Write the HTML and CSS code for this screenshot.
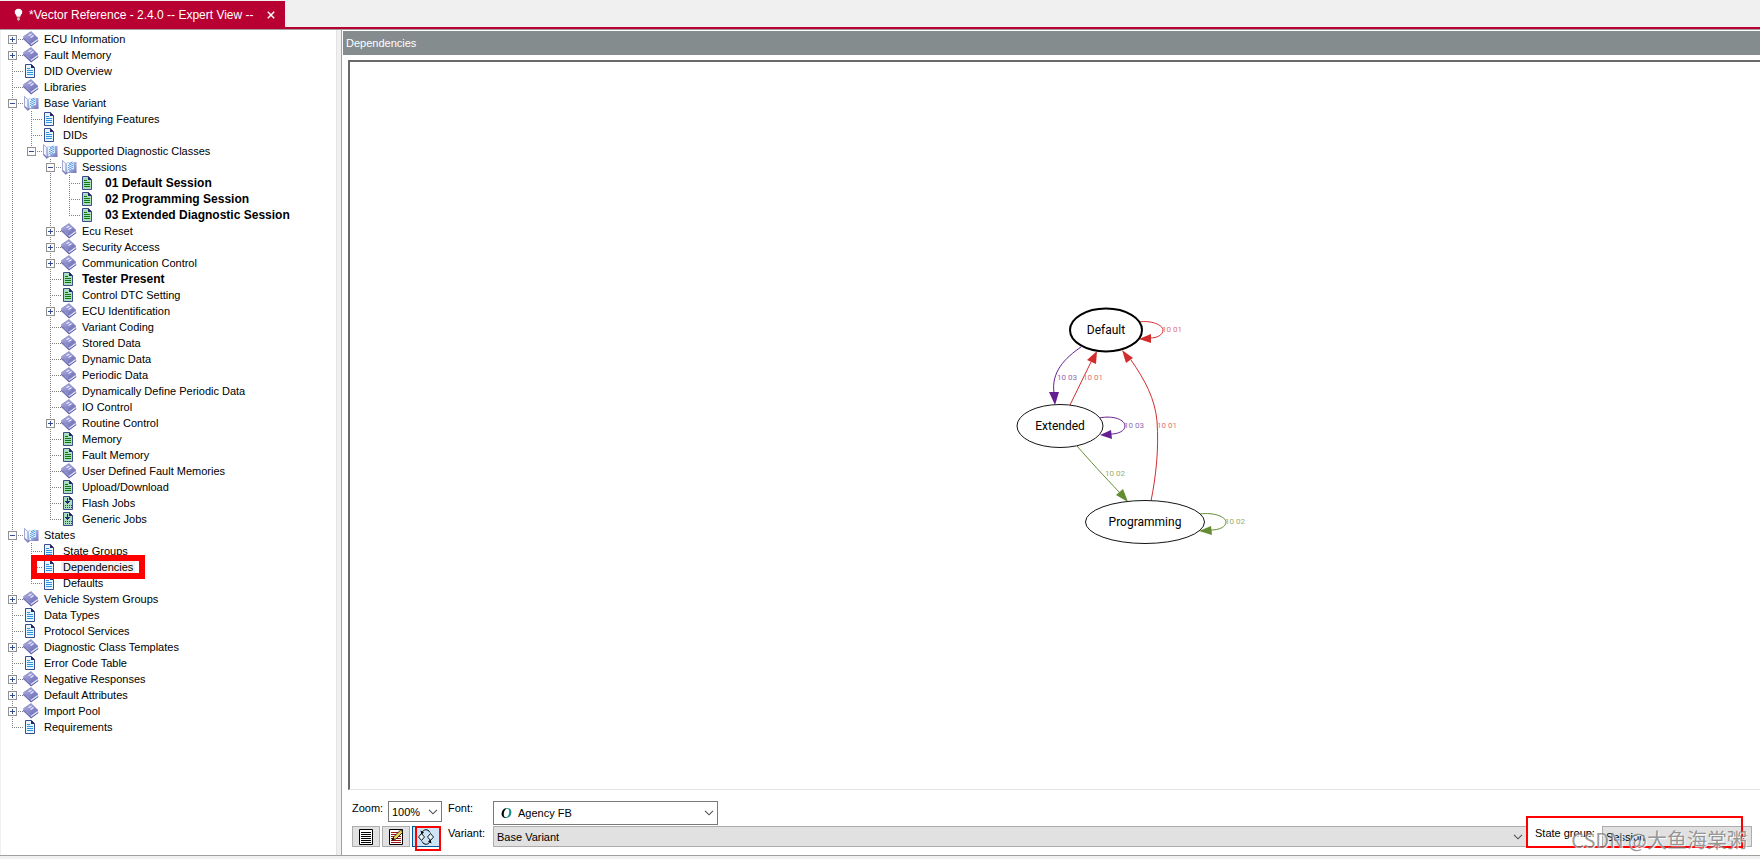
FILE: index.html
```
<!DOCTYPE html>
<html lang="en">
<head>
    <meta charset="utf-8">
    <title>Vector Reference</title>
    <link rel="stylesheet" href="styles.css">
</head>
<body>
    <svg class="defs" aria-hidden="true">
        <linearGradient id="book-fill" x1="0" y1="0" x2="1" y2="1">
            <stop offset="0" stop-color="#b4b4e6"/>
            <stop offset="1" stop-color="#6464b4"/>
        </linearGradient>
        <linearGradient id="cover-fill" x1="0" y1="0" x2="1" y2="1">
            <stop offset="0" stop-color="#d2dcf5"/>
            <stop offset="1" stop-color="#6e6eb9"/>
        </linearGradient>
        <symbol id="book" viewBox="0 0 16 16">
            <path d="M0 7.5 L8 15.5 L15.5 10 L14.5 8 Z" fill="#5a5aa5"/>
            <path d="M2 8.5 L8.3 14 L15 9.2 L14 7.5 Z" fill="#e6e6f5"/>
            <path d="M.5 5.5 L8 .5 L15 7.2 L7.8 12.5 Z" fill="url(#book-fill)" stroke="#7878be" stroke-width=".6"/>
            <path d="M0 6 L8 13 L8 15 L0 8 Z" fill="#7878be"/>
            <path d="M5.5 4.8 L8.5 3 M7.5 6.5 L10.5 4.6" stroke="#f0f0ff" stroke-width="1.2"/>
        </symbol>
        <symbol id="open" viewBox="0 0 16 16">
            <path d="M4.5 4 L7 3 H15.5 V14 H7 L4.5 15.5 Z" fill="url(#cover-fill)"/>
            <path d="M1.5 1.5 L4.8 4.5 V14 L1.5 11.5 Z" fill="#f0f4ff" stroke="#8c96c8" stroke-width=".8"/>
            <path d="M1.5 11.5 L4.8 15 L6.5 13.5" fill="none" stroke="#7878be" stroke-width="1.2"/>
            <path d="M6 4.5 L12.5 1.2 L13 9.8 L6.5 13.5 Z" fill="#f0f8ff"/>
            <path d="M8 4.7 L11.5 3 M7 6.7 L12.3 4.2 M7 8.7 L12.5 6 M7 10.7 L12.3 8 M8 12 L11.5 10.2" stroke="#4696dc" stroke-width=".9"/>
        </symbol>
        <symbol id="page" viewBox="1 0 16 16">
            <path d="M3.5 1.5 H9.5 L12.5 4.5 V14.5 H3.5 Z" fill="#e8f5ff" stroke="#3c4b8c"/>
            <path d="M9 1 V5 H13 Z" fill="#28286e"/>
            <path d="M5 5.5 H8 M5 7.5 H11 M5 9.5 H11 M5 11.5 H11" stroke="#2896e6"/>
        </symbol>
        <symbol id="green" viewBox="1 0 16 16">
            <path d="M3.5 1.5 H9.5 L12.5 4.5 V14.5 H3.5 Z" fill="#aadcbe" stroke="#3c4b8c"/>
            <path d="M9 1 V5 H13 Z" fill="#28286e"/>
            <path d="M5 5.5 H8 M5 7.5 H11 M5 9.5 H11 M5 11.5 H11" stroke="#0a780a"/>
        </symbol>
        <symbol id="job" viewBox="1 0 16 16">
            <path d="M3.5 1.5 H9.5 L12.5 4.5 V14.5 H3.5 Z" fill="#aadcbe" stroke="#3c4b8c"/>
            <path d="M9 1 V5 H13 Z" fill="#28286e"/>
            <path d="M7.5 3 V7 M5 6.5 H10 M6 7.5 H9 M7 8.5 H8" stroke="#28286e"/>
            <path d="M5 10.5 H12 M5 12.5 H12" stroke="#145a32" stroke-dasharray="1 1"/>
        </symbol>
        <symbol id="chevron" viewBox="0 0 10 6">
            <path d="M1 .8 L5 4.8 L9 .8" fill="none" stroke="#505050" stroke-width="1.1"/>
        </symbol>
    </svg>

    <header class="tabs">
        <div class="tab">
            <svg class="bulb" viewBox="0 0 10 14"><path d="M5 0 C2 0 .8 2.2 .8 4 C.8 6 3 7 3 9 H7 C7 7 9.2 6 9.2 4 C9.2 2.2 8 0 5 0 Z" fill="#fff"/><path d="M3.5 9.5 H6.5 V12 L5 14 L3.5 12 Z" fill="#b4bea0"/></svg>
            <span>*Vector Reference - 2.4.0 -- Expert View --</span>
            <button class="close" aria-label="Close tab"><svg viewBox="0 0 8 8"><path d="M.8 .8 L7.2 7.2 M7.2 .8 L.8 7.2" stroke="#fff" stroke-width="1.5"/></svg></button>
        </div>
    </header>

    <main class="main">
        <nav class="sidebar">
            <ul class="tree">
                <li><div class="row"><button class="toggle plus" aria-label="Expand"></button><svg><use href="#book"/></svg><a href="#">ECU Information</a></div></li>
                <li><div class="row"><button class="toggle plus" aria-label="Expand"></button><svg><use href="#book"/></svg><a href="#">Fault Memory</a></div></li>
                <li><div class="row"><svg><use href="#page"/></svg><a href="#">DID Overview</a></div></li>
                <li><div class="row"><svg><use href="#book"/></svg><a href="#">Libraries</a></div></li>
                <li>
                    <div class="row"><button class="toggle" aria-label="Collapse"></button><svg><use href="#open"/></svg><a href="#">Base Variant</a></div>
                    <ul>
                        <li><div class="row"><svg><use href="#page"/></svg><a href="#">Identifying Features</a></div></li>
                        <li><div class="row"><svg><use href="#page"/></svg><a href="#">DIDs</a></div></li>
                        <li>
                            <div class="row"><button class="toggle" aria-label="Collapse"></button><svg><use href="#open"/></svg><a href="#">Supported Diagnostic Classes</a></div>
                            <ul>
                                <li>
                                    <div class="row"><button class="toggle" aria-label="Collapse"></button><svg><use href="#open"/></svg><a href="#">Sessions</a></div>
                                    <ul class="sessions">
                                        <li><div class="row"><svg><use href="#green"/></svg><a href="#" class="bold">01 Default Session</a></div></li>
                                        <li><div class="row"><svg><use href="#green"/></svg><a href="#" class="bold">02 Programming Session</a></div></li>
                                        <li><div class="row"><svg><use href="#green"/></svg><a href="#" class="bold">03 Extended Diagnostic Session</a></div></li>
                                    </ul>
                                </li>
                                <li><div class="row"><button class="toggle plus" aria-label="Expand"></button><svg><use href="#book"/></svg><a href="#">Ecu Reset</a></div></li>
                                <li><div class="row"><button class="toggle plus" aria-label="Expand"></button><svg><use href="#book"/></svg><a href="#">Security Access</a></div></li>
                                <li><div class="row"><button class="toggle plus" aria-label="Expand"></button><svg><use href="#book"/></svg><a href="#">Communication Control</a></div></li>
                                <li><div class="row"><svg><use href="#green"/></svg><a href="#" class="bold">Tester Present</a></div></li>
                                <li><div class="row"><svg><use href="#green"/></svg><a href="#">Control DTC Setting</a></div></li>
                                <li><div class="row"><button class="toggle plus" aria-label="Expand"></button><svg><use href="#book"/></svg><a href="#">ECU Identification</a></div></li>
                                <li><div class="row"><svg><use href="#book"/></svg><a href="#">Variant Coding</a></div></li>
                                <li><div class="row"><svg><use href="#book"/></svg><a href="#">Stored Data</a></div></li>
                                <li><div class="row"><svg><use href="#book"/></svg><a href="#">Dynamic Data</a></div></li>
                                <li><div class="row"><svg><use href="#book"/></svg><a href="#">Periodic Data</a></div></li>
                                <li><div class="row"><svg><use href="#book"/></svg><a href="#">Dynamically Define Periodic Data</a></div></li>
                                <li><div class="row"><svg><use href="#book"/></svg><a href="#">IO Control</a></div></li>
                                <li><div class="row"><button class="toggle plus" aria-label="Expand"></button><svg><use href="#book"/></svg><a href="#">Routine Control</a></div></li>
                                <li><div class="row"><svg><use href="#green"/></svg><a href="#">Memory</a></div></li>
                                <li><div class="row"><svg><use href="#green"/></svg><a href="#">Fault Memory</a></div></li>
                                <li><div class="row"><svg><use href="#book"/></svg><a href="#">User Defined Fault Memories</a></div></li>
                                <li><div class="row"><svg><use href="#green"/></svg><a href="#">Upload/Download</a></div></li>
                                <li><div class="row"><svg><use href="#job"/></svg><a href="#">Flash Jobs</a></div></li>
                                <li><div class="row"><svg><use href="#job"/></svg><a href="#">Generic Jobs</a></div></li>
                            </ul>
                        </li>
                    </ul>
                </li>
                <li>
                    <div class="row"><button class="toggle" aria-label="Collapse"></button><svg><use href="#open"/></svg><a href="#">States</a></div>
                    <ul>
                        <li><div class="row"><svg><use href="#page"/></svg><a href="#">State Groups</a></div></li>
                        <li><div class="row marked"><svg><use href="#page"/></svg><a href="#" class="selected">Dependencies</a></div></li>
                        <li><div class="row"><svg><use href="#page"/></svg><a href="#">Defaults</a></div></li>
                    </ul>
                </li>
                <li><div class="row"><button class="toggle plus" aria-label="Expand"></button><svg><use href="#book"/></svg><a href="#">Vehicle System Groups</a></div></li>
                <li><div class="row"><svg><use href="#page"/></svg><a href="#">Data Types</a></div></li>
                <li><div class="row"><svg><use href="#page"/></svg><a href="#">Protocol Services</a></div></li>
                <li><div class="row"><button class="toggle plus" aria-label="Expand"></button><svg><use href="#book"/></svg><a href="#">Diagnostic Class Templates</a></div></li>
                <li><div class="row"><svg><use href="#page"/></svg><a href="#">Error Code Table</a></div></li>
                <li><div class="row"><button class="toggle plus" aria-label="Expand"></button><svg><use href="#book"/></svg><a href="#">Negative Responses</a></div></li>
                <li><div class="row"><button class="toggle plus" aria-label="Expand"></button><svg><use href="#book"/></svg><a href="#">Default Attributes</a></div></li>
                <li><div class="row"><button class="toggle plus" aria-label="Expand"></button><svg><use href="#book"/></svg><a href="#">Import Pool</a></div></li>
                <li><div class="row"><svg><use href="#page"/></svg><a href="#">Requirements</a></div></li>
            </ul>
        </nav>

        <section class="content">
            <h1>Dependencies</h1>
            <div class="canvas">
                <svg class="graph" viewBox="0 0 270 270">
                    <g fill="none" stroke="#d22d2d">
                        <path d="M139 31 C151 29 163 34 163 39 C163 44 157 47 150 47"/>
                        <path d="M70 114 L91 71"/>
                        <path d="M151 210 C156 185 159 158 157 130 C155 108 145 89 131 69"/>
                    </g>
                    <g fill="#d22d2d">
                        <path d="M139 48 L151 43 L151 52 Z"/>
                        <path d="M97 60 L96 73 L87 69 Z"/>
                        <path d="M122 59 L133 67 L126 72 Z"/>
                    </g>
                    <g fill="none" stroke="#641e91">
                        <path d="M81 56 C65 67 51 81 54 102"/>
                        <path d="M99 127 C114 124 125 129 125 135 C125 140 118 143 111 143"/>
                    </g>
                    <g fill="#641e91">
                        <path d="M55 114 L49 101 L59 101 Z"/>
                        <path d="M100 144 L111 139 L112 148 Z"/>
                    </g>
                    <g fill="none" stroke="#648c32">
                        <path d="M77 155 C90 170 103 184 120 202"/>
                        <path d="M200 223 C214 221 226 226 226 231 C226 236 219 239 211 239"/>
                    </g>
                    <g fill="#648c32">
                        <path d="M128 211 L116 204 L123 198 Z"/>
                        <path d="M199 240 L211 235 L212 244 Z"/>
                    </g>
                    <g fill="#fff" stroke="#141414">
                        <ellipse cx="106" cy="39" rx="36" ry="21.5" stroke="#000" stroke-width="2"/>
                        <ellipse cx="60" cy="135" rx="43" ry="21.5"/>
                        <ellipse cx="145" cy="231" rx="59.5" ry="21.5"/>
                    </g>
                    <g class="node">
                        <text x="106" y="43">Default</text>
                        <text x="60" y="139">Extended</text>
                        <text x="145" y="235">Programming</text>
                    </g>
                    <g class="edge">
                        <text class="red" x="162" y="41">10 01</text>
                        <text class="purple" x="57" y="89">10 03</text>
                        <text class="red" x="83" y="89">10 01</text>
                        <text class="purple" x="124" y="137">10 03</text>
                        <text class="red" x="157" y="137">10 01</text>
                        <text class="green" x="105" y="185">10 02</text>
                        <text class="green" x="225" y="233">10 02</text>
                    </g>
                </svg>
            </div>

            <form class="toolbar">
                <div class="zoom">
                    <label for="zoom">Zoom:</label>
                    <span class="select">
                        <select id="zoom"><option>100%</option></select>
                        <svg><use href="#chevron"/></svg>
                    </span>
                </div>
                <label for="font">Font:</label>
                <span class="select font">
                    <select id="font"><option>Agency FB</option></select>
                    <i class="opentype" aria-hidden="true">O</i>
                    <svg><use href="#chevron"/></svg>
                </span>
                <div class="buttons">
                    <button type="button" aria-label="List">
                        <svg viewBox="0 0 16 16"><path d="M1.5 .5 H14.5 V15.5 H1.5 Z" fill="#fff" stroke="#000"/><path d="M3 3.5 H13 M3 5.5 H13 M3 7.5 H13 M3 9.5 H13 M3 11.5 H13 M3 13.5 H13" stroke="#000"/></svg>
                    </button>
                    <button type="button" aria-label="Edit">
                        <svg viewBox="0 0 16 16"><path d="M1.5 .5 H14.5 V15.5 H1.5 Z" fill="#fff" stroke="#000"/><path d="M3 3.5 H13 M3 5.5 H13 M3 7.5 H13 M3 9.5 H13 M3 11.5 H13 M3 13.5 H13" stroke="#a01414"/><path d="M4 11 L6 7.5 L12.5 1 L15 3 L8 10 Z" fill="#e6d25a" stroke="#000" stroke-width=".8"/><path d="M4 11 L5 8.5 L6.5 10 Z" fill="#000"/></svg>
                    </button>
                    <button type="button" class="active" aria-label="Graph">
                        <svg viewBox="0 0 16 16"><path d="M.5 8 L3.5 4.5 L6.5 8 L3.5 11.5 Z M9.5 8 L12.5 4.5 L15.5 8 L12.5 11.5 Z" fill="#e8f4ff" stroke="#000" stroke-width=".9"/><path d="M4 4 C5 0 10 -.5 12 3.5 M12 12 C11 16 6 16.5 4 12.5" fill="none" stroke="#000"/><path d="M2.5 1.5 L3.5 5.5 L6 3.5 Z M13.5 14.5 L12.5 10.5 L10 12.5 Z"/></svg>
                    </button>
                </div>
                <label for="variant">Variant:</label>
                <span class="select gray">
                    <select id="variant"><option>Base Variant</option></select>
                    <svg><use href="#chevron"/></svg>
                </span>
                <label for="group" class="group-label">State group:</label>
                <span class="select gray">
                    <select id="group"><option>Session</option></select>
                    <svg><use href="#chevron"/></svg>
                </span>
                <div class="group-mark"></div>
            </form>
        </section>
    </main>
    <div class="watermark">CSDN @大鱼海棠粥</div>
</body>
</html>
```
FILE: styles.css
```
*, *::before, *::after {
    box-sizing: border-box;
}
body {
    margin: 0;
    min-height: 100vh;
    display: flex;
    flex-direction: column;
    background-color: #f0f0f0;
    color: #000;
    font: 11px "Liberation Sans", Arial, sans-serif;
    position: relative;
    overflow-x: hidden;
}
button, select {
    font: inherit;
    color: inherit;
    margin: 0;
    padding: 0;
    border-radius: 0;
}
.defs {
    position: absolute;
    width: 0;
    height: 0;
}

/* title tab */
.tabs {
    padding-top: 1px;
    border-bottom: 2px solid #b90032;
}
.tab {
    display: inline-flex;
    align-items: center;
    vertical-align: top;
    height: 26px;
    padding: 2px 9px 0 14px;
    background-color: #b90032;
    color: #fff;
    font-size: 12px;
}
.bulb {
    width: 9px;
    height: 14px;
    margin-right: 6px;
}
.close {
    width: 9px;
    height: 9px;
    margin-left: 13px;
    border: none;
    background: none;
    line-height: 0;
}
.close svg {
    width: 8px;
    height: 8px;
}

.main {
    flex: 1;
    display: flex;
    border-top: 1px solid #a0a0a0;
    border-bottom: 1px solid #a0a0a0;
    margin-bottom: 3px;
}

/* tree */
.sidebar {
    width: 337px;
    flex-shrink: 0;
    padding-top: 1px;
    background-color: #fff;
    border-left: 1px solid #f0f0f0;
    border-right: 1px solid #e3e3e3;
}
.tree, .tree ul {
    list-style: none;
    margin: 0;
    padding: 0;
}
.tree ul {
    margin-left: 19px;
}
.tree li {
    background: repeating-linear-gradient(#808080 0 1px, transparent 1px 2px) 11px 0 / 1px 100% no-repeat;
}
.tree li:last-child {
    background-size: 1px 8px;
}
.tree > li:first-child {
    background-position: 11px 8px;
}
.row {
    display: flex;
    align-items: center;
    height: 16px;
    padding-left: 7px;
    background: repeating-linear-gradient(90deg, #808080 0 1px, transparent 1px 2px) 11px 8px / 11px 1px no-repeat;
}
.row svg {
    width: 16px;
    height: 16px;
    margin-left: 15px;
}
.row a {
    color: #000;
    text-decoration: none;
    line-height: 14px;
    margin-left: 3px;
    padding: 0 2px;
    white-space: nowrap;
}
.row a.bold {
    font-size: 12px;
    font-weight: bold;
}
.sessions .row a.bold {
    margin-left: 7px;
}
.row a.selected {
    background-color: #f0f0f0;
}
.toggle {
    width: 9px;
    height: 9px;
    border: 1px solid #919191;
    background: linear-gradient(#324b96, #324b96) center / 5px 1px no-repeat #fcfcfc;
}
.toggle.plus {
    background: linear-gradient(#324b96, #324b96) center / 5px 1px no-repeat, linear-gradient(#324b96, #324b96) center / 1px 5px no-repeat #fcfcfc;
}
.row .toggle + svg {
    margin-left: 6px;
}
.marked {
    position: relative;
}
.marked::after {
    content: "";
    position: absolute;
    left: 11px;
    top: -4px;
    width: 114px;
    height: 24px;
    border: 6px solid #f00;
    pointer-events: none;
}

/* right side */
.content {
    flex: 1;
    min-width: 0;
    margin-left: 4px;
    padding: 1px 0 8px 1px;
    display: flex;
    flex-direction: column;
    background-color: #fff;
    border-left: 1px solid #a0a0a0;
}
h1 {
    margin: 0;
    padding-left: 3px;
    background-color: #848c8e;
    color: #fff;
    font-size: 11px;
    font-weight: normal;
    line-height: 24px;
}
.canvas {
    flex: 1;
    display: flex;
    align-items: center;
    justify-content: center;
    margin: 5px 0 0 5px;
    padding-left: 160px;
    border-top: 2px solid #696969;
    border-left: 2px solid #696969;
    border-bottom: 1px solid #e3e3e3;
}
.graph {
    width: 270px;
    height: 270px;
}
.graph text {
    font-family: Roboto, sans-serif;
}
.node text {
    font-size: 12px;
    text-anchor: middle;
}
.edge text {
    font-size: 8px;
}
.red {
    fill: #e17373;
}
.purple {
    fill: #9369b4;
}
.green {
    fill: #93ae70;
}

/* toolbar */
.toolbar {
    position: relative;
    display: grid;
    grid-template-columns: 90px 39px 1fr 63px 150px;
    grid-template-rows: 24px 21px;
    gap: 1px 6px;
    padding: 11px 8px 0 9px;
}
.toolbar label {
    line-height: 14px;
}
.zoom {
    display: flex;
    align-items: flex-start;
}
.zoom label {
    width: 36px;
}
.zoom .select {
    flex: 1;
    height: 21px;
}
.select {
    display: grid;
}
.select > * {
    grid-area: 1 / 1;
}
.select select {
    appearance: none;
    width: 100%;
    min-width: 0;
    padding: 0 20px 0 3px;
    border: 1px solid #7a7a7a;
    background-color: #fff;
}
.select svg {
    width: 10px;
    height: 6px;
    margin-right: 4px;
    place-self: center end;
    pointer-events: none;
}
.select.gray select {
    border-color: #adadad;
    background-color: #e1e1e1;
}
.select.font {
    grid-column: 3 / -1;
    width: 225px;
}
.select.font select {
    padding-left: 24px;
}
.opentype {
    align-self: center;
    justify-self: start;
    margin-left: 8px;
    font: italic bold 15px "Liberation Serif", serif;
    color: #000;
    background: linear-gradient(90deg, #000 50%, #148c8c 50%);
    background-clip: text;
    -webkit-text-fill-color: transparent;
    pointer-events: none;
}
.buttons {
    display: flex;
    gap: 2px;
}
.buttons button {
    width: 28px;
    height: 21px;
    display: flex;
    align-items: center;
    justify-content: center;
    border: 1px solid #adadad;
    background-color: #e1e1e1;
}
.buttons svg {
    width: 16px;
    height: 16px;
}
.buttons .active {
    position: relative;
    border-color: #005499;
    background-color: #cce4f7;
}
.active::after {
    content: "";
    position: absolute;
    left: 2px;
    top: -1px;
    width: 26px;
    height: 25px;
    border: 2px solid #f00;
}
.group-label {
    padding-left: 2px;
    white-space: nowrap;
}
.group-mark {
    position: absolute;
    right: 17px;
    bottom: -1px;
    width: 217px;
    height: 32px;
    border: 2px solid #f00;
    pointer-events: none;
}
.watermark {
    position: absolute;
    right: 13px;
    bottom: 4px;
    color: rgba(110, 110, 110, 0.7);
    font: 20px/30px "Noto Sans CJK SC", sans-serif;
    text-shadow: 1px 1px 1px #fff;
    pointer-events: none;
}
```
